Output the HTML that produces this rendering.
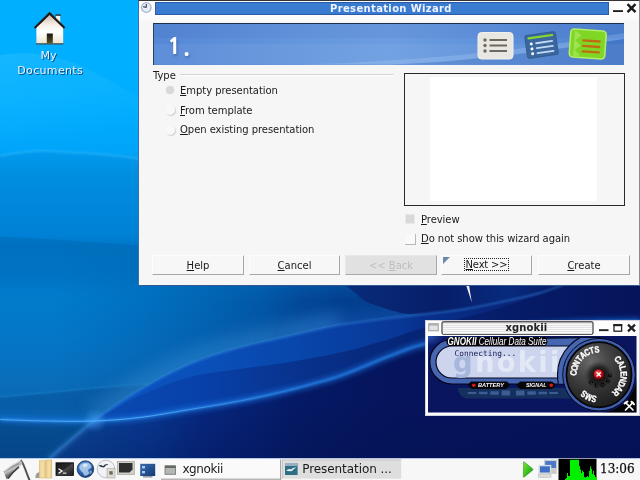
<!DOCTYPE html>
<html><head><meta charset="utf-8"><title>Desktop</title>
<style>
html,body{margin:0;padding:0;width:640px;height:480px;overflow:hidden;background:#0a2a80;}
body{position:relative;will-change:transform;font-family:"DejaVu Sans","Liberation Sans",sans-serif;font-size:11px;color:#000;}
.abs{position:absolute;}
#wall{position:absolute;left:0;top:0;width:640px;height:480px;}
u{text-decoration:underline;text-underline-offset:0.5px;text-decoration-thickness:1px;}
/* desktop icon */
.dlabel{position:absolute;color:#eef6ff;text-shadow:1px 1px 0 #0a2a50;font-size:11px;white-space:nowrap;}
/* dialog */
#dlg{position:absolute;left:138px;top:0;width:502px;height:286px;background:#f6f6f6;box-sizing:border-box;border-left:1px solid #3f6ea8;border-right:1px solid #8a8a8a;border-bottom:1px solid #33598f;border-top:1px solid #333;}
#dlg .titleblue{position:absolute;left:16px;top:1px;width:454px;height:13px;background:#3a7bd2;border:1px solid #2a5aa8;box-sizing:border-box;}
#dlg .title{position:absolute;left:191px;top:1px;width:200px;height:14px;line-height:14px;text-align:left;color:#eef3fb;font-weight:bold;font-size:10px;letter-spacing:0.35px;white-space:nowrap;}
.lbl{position:absolute;white-space:nowrap;font-size:10px;line-height:12px;letter-spacing:-0.05px;color:#1a1a1a;}
.btn{position:absolute;top:254px;height:20px;box-sizing:border-box;background:#f7f7f7;border-right:1px solid #a8a8a8;border-bottom:1px solid #a8a8a8;border-top:1px solid #fdfdfd;border-left:1px solid #fdfdfd;text-align:center;line-height:20px;font-size:10px;color:#1a1a1a;}
/* taskbar */
#tb{position:absolute;left:0;top:458px;width:640px;height:22px;background:#f1f1f1;border-top:1px solid #fafafa;box-sizing:border-box;}
</style></head><body>
<svg id="wall" viewBox="0 0 640 480">
<defs>
<linearGradient id="g0" x1="0" y1="0" x2="0" y2="1"><stop offset="0.0000" stop-color="#00b0ff"/><stop offset="0.2083" stop-color="#00aeff"/><stop offset="0.3125" stop-color="#00a5fa"/><stop offset="0.3646" stop-color="#0093e4"/><stop offset="0.4104" stop-color="#0089de"/><stop offset="0.4896" stop-color="#0081d5"/><stop offset="0.5125" stop-color="#0077c8"/><stop offset="0.5729" stop-color="#0076c6"/><stop offset="0.6250" stop-color="#007ccb"/><stop offset="0.7292" stop-color="#0674c4"/><stop offset="0.8125" stop-color="#0a6cb8"/><stop offset="0.8750" stop-color="#0a64b0"/><stop offset="0.9542" stop-color="#0a58a8"/><stop offset="1.0000" stop-color="#0a54a0"/></linearGradient>
<linearGradient id="gx" gradientUnits="userSpaceOnUse" x1="0" y1="0" x2="470" y2="0"><stop offset="0.0000" stop-color="#061060" stop-opacity="0"/><stop offset="0.1277" stop-color="#061060" stop-opacity="0.0"/><stop offset="0.2979" stop-color="#061060" stop-opacity="0.1"/><stop offset="0.4255" stop-color="#061060" stop-opacity="0.2"/><stop offset="0.5532" stop-color="#061060" stop-opacity="0.33"/><stop offset="0.6383" stop-color="#061060" stop-opacity="0.47"/><stop offset="0.7234" stop-color="#061060" stop-opacity="0.56"/><stop offset="0.8511" stop-color="#061060" stop-opacity="0.6"/><stop offset="1.0000" stop-color="#061060" stop-opacity="0.6"/></linearGradient>
<linearGradient id="gvm" x1="0" y1="0" x2="0" y2="1"><stop offset="0" stop-color="#fff" stop-opacity="0"/><stop offset="0.25" stop-color="#fff" stop-opacity="1"/><stop offset="1" stop-color="#fff" stop-opacity="1"/></linearGradient>
<mask id="mv"><rect x="0" y="240" width="640" height="240" fill="url(#gvm)"/></mask>
<linearGradient id="gS1" gradientUnits="userSpaceOnUse" x1="60" y1="0" x2="640" y2="0"><stop offset="0.0000" stop-color="#0c56ba"/><stop offset="0.1379" stop-color="#0a52be"/><stop offset="0.2414" stop-color="#0a50ba"/><stop offset="0.4138" stop-color="#0846aa"/><stop offset="0.5862" stop-color="#083796"/><stop offset="0.6293" stop-color="#08308c"/><stop offset="0.7759" stop-color="#082476"/><stop offset="1.0000" stop-color="#06165c"/></linearGradient>
<linearGradient id="gS1b" gradientUnits="userSpaceOnUse" x1="60" y1="0" x2="640" y2="0"><stop offset="0.0000" stop-color="#0a4eb4"/><stop offset="0.2414" stop-color="#0841aa"/><stop offset="0.4138" stop-color="#08328c"/><stop offset="0.5862" stop-color="#072678"/><stop offset="0.7759" stop-color="#061c68"/><stop offset="1.0000" stop-color="#06145a"/></linearGradient>
<linearGradient id="gS2" gradientUnits="userSpaceOnUse" x1="40" y1="0" x2="640" y2="0"><stop offset="0.0000" stop-color="#0a50a0"/><stop offset="0.1000" stop-color="#094298"/><stop offset="0.1833" stop-color="#083892"/><stop offset="0.2667" stop-color="#062880"/><stop offset="0.4333" stop-color="#051964"/><stop offset="0.6000" stop-color="#05145c"/><stop offset="1.0000" stop-color="#06125a"/></linearGradient>
<linearGradient id="gS2v" gradientUnits="userSpaceOnUse" x1="0" y1="400" x2="0" y2="458"><stop offset="0" stop-color="#04104a" stop-opacity="0"/><stop offset="1" stop-color="#04104a" stop-opacity="0.3"/></linearGradient>
<linearGradient id="gband" gradientUnits="userSpaceOnUse" x1="0" y1="388" x2="0" y2="421"><stop offset="0" stop-color="#003c80" stop-opacity=".3"/><stop offset="0.6" stop-color="#003c80" stop-opacity=".25"/><stop offset="1" stop-color="#0050b0" stop-opacity=".05"/></linearGradient>
<linearGradient id="ge2" gradientUnits="userSpaceOnUse" x1="0" y1="238" x2="0" y2="290"><stop offset="0" stop-color="#00407a" stop-opacity=".16"/><stop offset="1" stop-color="#00407a" stop-opacity="0"/></linearGradient>
<linearGradient id="garc0" gradientUnits="userSpaceOnUse" x1="0" y1="55" x2="20" y2="150"><stop offset="0" stop-color="#60d0ff" stop-opacity=".22"/><stop offset="1" stop-color="#60d0ff" stop-opacity="0"/></linearGradient>
<linearGradient id="garc" gradientUnits="userSpaceOnUse" x1="0" y1="152" x2="0" y2="200"><stop offset="0" stop-color="#003a90" stop-opacity=".10"/><stop offset="1" stop-color="#003a90" stop-opacity="0"/></linearGradient>
<linearGradient id="gD" gradientUnits="userSpaceOnUse" x1="344" y1="0" x2="563" y2="0"><stop offset="0" stop-color="#082c7c"/><stop offset="0.45" stop-color="#071e68"/><stop offset="0.75" stop-color="#082a7e"/><stop offset="1" stop-color="#071a62"/></linearGradient>
<linearGradient id="gcore" gradientUnits="userSpaceOnUse" x1="0" y1="0" x2="340" y2="0"><stop offset="0" stop-color="#7cccff" stop-opacity=".6"/><stop offset="0.35" stop-color="#7cccff" stop-opacity=".7"/><stop offset="1" stop-color="#7cccff" stop-opacity="0"/></linearGradient>
<radialGradient id="gglow"><stop offset="0" stop-color="#4aa8ff" stop-opacity=".45"/><stop offset="1" stop-color="#60b8ff" stop-opacity="0"/></radialGradient>
<filter id="b1" x="-5%" y="-50%" width="110%" height="200%"><feGaussianBlur stdDeviation="0.8"/></filter>
<clipPath id="cAbove"><path d="M50.0 458.0C57.3 451.8 79.0 432.3 94.0 421.0 C109.0 409.7 124.0 399.5 140.0 390.0 C156.0 380.5 173.3 371.1 190.0 364.0 C206.7 356.9 223.3 352.2 240.0 347.5 C256.7 342.8 273.3 339.8 290.0 336.0 C306.7 332.2 323.3 328.0 340.0 325.0 C356.7 322.0 375.8 319.8 390.0 318.0 C404.2 316.2 412.5 315.5 425.0 314.0 C437.5 312.5 451.5 311.2 465.0 309.0 C478.5 306.8 493.5 303.7 506.0 301.0 C518.5 298.3 530.5 295.7 540.0 293.0 C549.5 290.3 559.2 286.3 563.0 285.0 L563 270 L0 270 L0 458Z"/></clipPath>
<filter id="b8" x="-20%" y="-60%" width="140%" height="220%"><feGaussianBlur stdDeviation="9"/></filter>
<filter id="b3" x="-5%" y="-50%" width="110%" height="200%"><feGaussianBlur stdDeviation="2.5"/></filter>
</defs>
<rect width="640" height="480" fill="url(#g0)"/>
<rect y="240" width="640" height="240" fill="url(#gx)" mask="url(#mv)"/>
<!-- upper-left arc & edge 2 -->
<path d="M0 55.3 C15 53 28 53 37 54 C52 56 65 59.5 76.6 64 C90 70 100 75.5 109 80.5 C122 88 132 93 140 97 L140 156 L0 156Z" fill="url(#garc0)"/>
<path d="M0 156 C25 151 45 150 60 152 C90 153 115 155 140 159 L140 205 L0 205Z" fill="url(#garc)"/>
<path d="M0 156 C25 151 45 150 60 152 C90 153 115 155 140 159" fill="none" stroke="#48c4ff" stroke-width="1.4" opacity=".55" filter="url(#b1)"/>
<path d="M0 236.5 C50 239 100 242 140 246 L140 295 L0 295Z" fill="url(#ge2)"/>
<!-- light band on left -->
<path d="M0 397.5 L110 387.2 L150 384.5" fill="none" stroke="#3a9ae0" stroke-width="1" opacity=".45" filter="url(#b1)"/>
<path d="M0 397.7 L140 384.5 L150 385 L140.0 390.0 L117.0 405.0 L94.0 421.0 L0 419.5Z" fill="url(#gband)"/>
<g clip-path="url(#cAbove)"><path d="M94.0 421.0C101.7 415.8 124.0 399.5 140.0 390.0 C156.0 380.5 173.3 371.1 190.0 364.0 C206.7 356.9 223.3 352.2 240.0 347.5 C256.7 342.8 273.3 339.8 290.0 336.0 C306.7 332.2 331.7 326.8 340.0 325.0" fill="none" stroke="#50a8e8" stroke-width="26" opacity=".32" filter="url(#b8)"/><path d="M290.0 336.0C298.3 334.2 323.3 328.0 340.0 325.0 C356.7 322.0 375.8 319.8 390.0 318.0 C404.2 316.2 412.5 315.5 425.0 314.0 C437.5 312.5 458.3 309.8 465.0 309.0" fill="none" stroke="#2a78e0" stroke-width="16" opacity=".3" filter="url(#b8)"/></g>
<!-- region right of D above C2 -->
<path d="M344.0 284.0C345.8 285.5 351.5 290.2 355.0 293.0 C358.5 295.8 361.2 298.8 365.0 301.0 C368.8 303.2 373.8 304.5 378.0 306.0 C382.2 307.5 385.2 308.7 390.0 310.0 C394.8 311.3 401.2 313.3 407.0 314.0 C412.8 314.7 422.0 314.0 425.0 314.0 C431.7 313.2 451.5 311.2 465.0 309.0 C478.5 306.8 493.5 303.7 506.0 301.0 C518.5 298.3 530.5 295.7 540.0 293.0 C549.5 290.3 559.2 286.3 563.0 285.0 L563 284Z" fill="url(#gD)"/>
<rect x="563" y="284" width="77" height="60" fill="#06155b"/>
<!-- S1 upper sub-band -->
<path d="M50.0 458.0C57.3 451.8 79.0 432.3 94.0 421.0 C109.0 409.7 124.0 399.5 140.0 390.0 C156.0 380.5 173.3 371.1 190.0 364.0 C206.7 356.9 223.3 352.2 240.0 347.5 C256.7 342.8 273.3 339.8 290.0 336.0 C306.7 332.2 323.3 328.0 340.0 325.0 C356.7 322.0 375.8 319.8 390.0 318.0 C404.2 316.2 412.5 315.5 425.0 314.0 C437.5 312.5 451.5 311.2 465.0 309.0 C478.5 306.8 493.5 303.7 506.0 301.0 C518.5 298.3 530.5 295.7 540.0 293.0 C549.5 290.3 559.2 286.3 563.0 285.0 L640 284 L640 458Z" fill="url(#gS1)"/>
<!-- lower sub-band -->
<path d="M94.0 421.0C101.7 416.8 124.0 402.8 140.0 395.5 C156.0 388.2 173.3 381.4 190.0 377.0 C206.7 372.6 223.3 371.5 240.0 369.0 C256.7 366.5 273.3 364.8 290.0 362.0 C306.7 359.2 323.3 356.3 340.0 352.5 C356.7 348.7 375.8 343.2 390.0 339.0 C404.2 334.8 406.7 332.7 425.0 327.5 C443.3 322.3 477.0 315.1 500.0 308.0 C523.0 300.9 552.5 288.8 563.0 285.0 L640 284 L640 458 L94 458Z" fill="url(#gS1b)"/>
<!-- S2 dark under C1 -->
<path d="M94.0 421.0C101.7 420.4 124.0 419.4 140.0 417.5 C156.0 415.6 173.3 412.2 190.0 409.5 C206.7 406.8 223.3 404.2 240.0 401.0 C256.7 397.8 273.3 394.2 290.0 390.0 C306.7 385.8 323.3 381.7 340.0 376.0 C356.7 370.3 375.8 361.3 390.0 356.0 C404.2 350.7 406.7 348.3 425.0 344.0 C443.3 339.7 475.8 333.5 500.0 330.0 C524.2 326.5 546.7 324.5 570.0 323.0 C593.3 321.5 628.3 321.3 640.0 321.0 L640 458 L50 458 C86.7 427.2 57.3 451.8 50.0 458.0Z" fill="url(#gS2)"/>
<path d="M94.0 421.0C101.7 420.4 124.0 419.4 140.0 417.5 C156.0 415.6 173.3 412.2 190.0 409.5 C206.7 406.8 223.3 404.2 240.0 401.0 C256.7 397.8 273.3 394.2 290.0 390.0 C306.7 385.8 323.3 381.7 340.0 376.0 C356.7 370.3 375.8 361.3 390.0 356.0 C404.2 350.7 406.7 348.3 425.0 344.0 C443.3 339.7 475.8 333.5 500.0 330.0 C524.2 326.5 546.7 324.5 570.0 323.0 C593.3 321.5 628.3 321.3 640.0 321.0 L640 458 L50 458 C86.7 427.2 57.3 451.8 50.0 458.0Z" fill="url(#gS2v)"/>
<!-- highlights -->
<path d="M0 419.5 L94 421 L50 458 L0 458Z" fill="#002858" opacity=".36"/>
<path d="M96 419 L48 460" fill="none" stroke="#58a8ea" stroke-width="3.5" opacity=".45" filter="url(#b3)"/>
<path d="M0.0 419.5C7.8 419.8 31.3 420.8 47.0 421.0 C62.7 421.2 78.5 421.6 94.0 421.0 C109.5 420.4 124.0 419.4 140.0 417.5 C156.0 415.6 173.3 412.2 190.0 409.5 C206.7 406.8 223.3 404.2 240.0 401.0 C256.7 397.8 273.3 394.2 290.0 390.0 C306.7 385.8 323.3 381.7 340.0 376.0 C356.7 370.3 375.8 361.3 390.0 356.0 C404.2 350.7 406.7 348.3 425.0 344.0 C443.3 339.7 475.8 333.5 500.0 330.0 C524.2 326.5 546.7 324.5 570.0 323.0 C593.3 321.5 628.3 321.3 640.0 321.0" fill="none" stroke="#36a2ff" stroke-width="1.7" opacity=".95" filter="url(#b1)"/>
<path d="M0.0 419.5C7.8 419.8 31.3 420.8 47.0 421.0 C62.7 421.2 78.5 421.6 94.0 421.0 C109.5 420.4 124.0 419.4 140.0 417.5 C156.0 415.6 173.3 412.2 190.0 409.5 C206.7 406.8 223.3 404.2 240.0 401.0 C256.7 397.8 273.3 394.2 290.0 390.0 C306.7 385.8 323.3 381.7 340.0 376.0 C356.7 370.3 375.8 361.3 390.0 356.0 C404.2 350.7 406.7 348.3 425.0 344.0 C443.3 339.7 475.8 333.5 500.0 330.0 C524.2 326.5 546.7 324.5 570.0 323.0 C593.3 321.5 628.3 321.3 640.0 321.0" fill="none" stroke="#1a78e8" stroke-width="7" opacity=".5" filter="url(#b3)"/>
<path d="M50.0 458.0C57.3 451.8 79.0 432.3 94.0 421.0 C109.0 409.7 124.0 399.5 140.0 390.0 C156.0 380.5 173.3 371.1 190.0 364.0 C206.7 356.9 223.3 352.2 240.0 347.5 C256.7 342.8 273.3 339.8 290.0 336.0 C306.7 332.2 323.3 328.0 340.0 325.0 C356.7 322.0 375.8 319.8 390.0 318.0 C404.2 316.2 412.5 315.5 425.0 314.0 C437.5 312.5 451.5 311.2 465.0 309.0 C478.5 306.8 493.5 303.7 506.0 301.0 C518.5 298.3 530.5 295.7 540.0 293.0 C549.5 290.3 559.2 286.3 563.0 285.0" fill="none" stroke="#3a8cea" stroke-width="1.5" opacity=".6" filter="url(#b1)"/>
<path d="M0.0 419.5C7.8 419.8 31.3 420.8 47.0 421.0 C62.7 421.2 78.5 421.6 94.0 421.0 C109.5 420.4 124.0 419.4 140.0 417.5 C156.0 415.6 173.3 412.2 190.0 409.5 C206.7 406.8 223.3 404.2 240.0 401.0 C256.7 397.8 273.3 394.2 290.0 390.0 C306.7 385.8 331.7 378.3 340.0 376.0" fill="none" stroke="url(#gcore)" stroke-width=".9"/>
<circle cx="95" cy="421" r="12" fill="url(#gglow)"/>
<path d="M466 285 L471.8 302.5 L469 285Z" fill="#fff" opacity=".92"/>
</svg>

<!-- dialog window -->
<div id="dlg">
  <div class="abs" style="left:0;top:0;width:500px;height:21px;background:linear-gradient(#fdfdfd 0,#fdfdfd 15px,#f8f8f8 21px);"></div>
  <svg class="abs" style="left:1px;top:0px" width="13" height="13" viewBox="0 0 13 13"><circle cx="6.3" cy="6.5" r="4.8" fill="#e4eefb" stroke="#a9b2c6" stroke-width="1.2"/><path d="M6.3 6.5 L3.2 5.6 M6.3 6.5 L6.3 3" stroke="#3a3f55" stroke-width="1.1" fill="none"/></svg>
  <div class="titleblue"></div>
  <div class="title">Presentation Wizard</div>
  <svg class="abs" style="left:472px;top:1px" width="28" height="14" viewBox="0 0 28 14"><rect x="2" y="8.2" width="10" height="1.8" fill="#1a1a1a"/><path d="M16.5 2.2 L24.5 10.2 M24.5 2.2 L16.5 10.2" stroke="#1a1a1a" stroke-width="2.4" stroke-linecap="butt"/></svg>
  <!-- banner -->
  <div class="abs" id="banner" style="left:14px;top:22px;width:471px;height:42px;box-sizing:border-box;border-top:1px solid #1f2f4f;border-left:1px solid #2a3f66;background:linear-gradient(90deg,#5588d6 0%,#6496dd 30%,#6c9de1 50%,#5d90da 75%,#4b80d0 100%);overflow:hidden;">
    <div class="abs" style="left:13.7px;top:9.5px;font-family:'NanumGothic','Liberation Sans',sans-serif;font-size:21.5px;line-height:26px;letter-spacing:2.5px;font-weight:800;color:#fff;text-shadow:1px 2px 3px rgba(40,70,130,.55);">1.</div>
  </div>
  <div class="lbl" style="left:14px;top:69px;">Type</div>
  <div class="abs" style="left:41px;top:73px;width:214px;height:1px;background:#d4d4d4;"></div>
  <div class="abs" style="left:41px;top:74px;width:214px;height:1px;background:#fff;"></div>
  <div class="lbl" style="left:41px;top:84px;"><u>E</u>mpty presentation</div>
  <div class="lbl" style="left:41px;top:104px;"><u>F</u>rom template</div>
  <div class="lbl" style="left:41px;top:123px;"><u>O</u>pen existing presentation</div>
  <div class="abs" style="left:27px;top:85px;width:8px;height:8px;border-radius:5px;background:#d8d8d8;box-shadow:0 0 1px #e0e0e0;"></div>
  <div class="abs" style="left:26px;top:104px;width:10px;height:10px;border-radius:6px;background:#f8f8f8;box-shadow:1px 1px 1px #d0d0d0;"></div>
  <div class="abs" style="left:26px;top:124px;width:10px;height:10px;border-radius:6px;background:#f8f8f8;box-shadow:1px 1px 1px #d0d0d0;"></div>
  <!-- preview box -->
  <div class="abs" style="left:265px;top:72px;width:221px;height:133px;box-sizing:border-box;border:1px solid #2a2a2a;background:#f6f6f6;">
    <div class="abs" style="left:25px;top:3px;width:167px;height:124px;background:#fff;"></div>
  </div>
  <div class="abs" style="left:266px;top:213px;width:10px;height:10px;background:#d9d9d9;border:1px solid #e8e8e8;box-sizing:border-box;"></div>
  <div class="lbl" style="left:282px;top:213px;"><u>P</u>review</div>
  <div class="abs" style="left:266px;top:233px;width:11px;height:11px;background:#f9f9f9;border-right:1px solid #b8b8b8;border-bottom:1px solid #b8b8b8;box-sizing:border-box;"></div>
  <div class="lbl" style="left:282px;top:232px;"><u>D</u>o not show this wizard again</div>
  <div class="btn" style="left:13px;width:92px;"><u>H</u>elp</div>
  <div class="btn" style="left:110px;width:91px;"><u>C</u>ancel</div>
  <div class="btn" style="left:206px;width:92px;background:#e1e1e1;color:#bdbdbd;border-top-color:#e8e8e8;border-left-color:#e8e8e8;">&lt;&lt; <u>B</u>ack</div>
  <div class="btn" style="left:302px;width:91px;"><span style="display:inline-block;position:relative;top:-1px;border:1px dotted #222;line-height:11px;padding:0 0.5px;letter-spacing:-0.2px;"><u>N</u>ext &gt;&gt;</span>
    <svg class="abs" style="left:1px;top:1px" width="8" height="8"><path d="M0 0H7L0 7Z" fill="#6c87b0"/></svg></div>
  <div class="btn" style="left:399px;width:92px;"><u>C</u>reate</div>
</div>

<!-- overlay icons in page coordinates -->
<svg id="ov" class="abs" style="left:0;top:0;pointer-events:none" width="640" height="480" viewBox="0 0 640 480">
<g id="xgnokii" font-family="'DejaVu Sans','Liberation Sans',sans-serif">
<defs>
<radialGradient id="dial" cx="0.38" cy="0.3" r="0.75"><stop offset="0" stop-color="#6a6a6a"/><stop offset="0.35" stop-color="#474747"/><stop offset="0.7" stop-color="#2c2c2c"/><stop offset="1" stop-color="#1c1c1c"/></radialGradient>
<radialGradient id="dialc" cx="0.5" cy="0.5" r="0.5"><stop offset="0" stop-color="#0c0c0c"/><stop offset="0.6" stop-color="#1a1a1a" stop-opacity=".8"/><stop offset="1" stop-color="#333" stop-opacity="0"/></radialGradient>
<radialGradient id="redb" cx="0.4" cy="0.35" r="0.7"><stop offset="0" stop-color="#ff6a6a"/><stop offset="0.5" stop-color="#c4141c"/><stop offset="1" stop-color="#6a0008"/></radialGradient>
<radialGradient id="xgbg" cx="0" cy="0" r="1"><stop offset="0" stop-color="#2a56b0"/><stop offset="0.25" stop-color="#0c1c6c"/><stop offset="1" stop-color="#0a1560"/></radialGradient>
<clipPath id="xgclip"><rect x="428" y="336" width="208.5" height="76.5"/></clipPath>
<clipPath id="frclip"><rect x="540" y="338" width="59" height="45.5"/></clipPath>
<clipPath id="lcdclip"><path d="M452 346 L590 346 L590 378 L452 378 A16 16 0 0 1 452 346Z"/></clipPath>
</defs>
<rect x="425.5" y="320.5" width="214" height="95" fill="#fdfdfd" stroke="#cfd3de" stroke-width="1"/>
<!-- menu button -->
<rect x="428.75" y="323.75" width="9.5" height="7" fill="#e4e4e4" stroke="#9a9a9a" stroke-width="1"/><rect x="429" y="324" width="9" height="1.6" fill="#b0b0b0"/>
<!-- title field -->
<rect x="442" y="321.7" width="151" height="12.6" rx="2" fill="#fafafa" stroke="#5a5a5a" stroke-width="1.4"/>
<rect x="443" y="323" width="149" height="1" fill="#e2e2e2"/><rect x="443" y="325" width="149" height="1" fill="#e2e2e2"/><rect x="443" y="327" width="149" height="1" fill="#e2e2e2"/><rect x="443" y="329" width="149" height="1" fill="#e2e2e2"/><rect x="443" y="331" width="149" height="1" fill="#e2e2e2"/><rect x="443" y="333" width="149" height="1" fill="#e2e2e2"/>
<text x="505.5" y="331" font-size="10" font-weight="bold" fill="#222" letter-spacing="0.1">xgnokii</text>
<rect x="599" y="329.2" width="9.5" height="1.9" fill="#222"/>
<rect x="614" y="324.8" width="7.6" height="6.4" fill="none" stroke="#222" stroke-width="1.3"/><rect x="613.4" y="324" width="8.8" height="2.2" fill="#222"/>
<path d="M628 324.7 L635 331.3 M635 324.7 L628 331.3" stroke="#222" stroke-width="2.3"/>
<!-- content -->
<rect x="428" y="336" width="208.5" height="76.5" fill="#0a1560"/>
<g clip-path="url(#xgclip)">
<rect x="428" y="336" width="60" height="40" fill="url(#xgbg)"/>
<path d="M600 412.5 L636.5 412.5 L636.5 372 A37 37 0 0 1 600 412.5Z" fill="#050505"/>
<!-- blue frame -->
<path d="M452 339.5 L600 337.5 L600 384 L452 384 A22.25 22.25 0 0 1 452 339.5Z" fill="#4766b2" stroke="#05081c" stroke-width="1.2"/>
<!-- teal bar -->
<path d="M457.5 388 L580 388 L580 398.5 L468 398.5 Q459 398 457.5 388Z" fill="#15305e"/>
<rect x="467.8" y="392.00" width="8.5" height="2" fill="#3e5c92"/><rect x="479" y="391.75" width="8.5" height="2.5" fill="#3e5c92"/><rect x="490.3" y="391.25" width="8.5" height="3.5" fill="#3e5c92"/><rect x="501.6" y="390.50" width="8.5" height="5" fill="#3e5c92"/><rect x="516" y="390.50" width="8.5" height="5" fill="#3e5c92"/><rect x="527.3" y="391.25" width="8.5" height="3.5" fill="#3e5c92"/><rect x="538.5" y="391.75" width="8.5" height="2.5" fill="#3e5c92"/><rect x="549.4" y="392.00" width="8.5" height="2" fill="#3e5c92"/>
<!-- lcd -->
<path d="M452 346 L590 346 L590 378 L452 378 A16 16 0 0 1 452 346Z" fill="#ccd4ee" stroke="#05081c" stroke-width="1.2"/>
<g clip-path="url(#lcdclip)">
<text x="453" y="371.5" font-size="27.5" font-weight="bold" font-family="'DejaVu Sans','Liberation Sans',sans-serif" letter-spacing="2.2"><tspan fill="#a7b6db">g</tspan><tspan fill="#e3e8f6">nokii</tspan></text>
</g>
<text x="454.5" y="356" font-size="7.8" fill="#101850" font-family="'DejaVu Sans Mono','Liberation Mono',monospace" letter-spacing="0.05">Connecting...</text>
<!-- title pill -->
<path d="M449 337 L545 337 Q550 341.5 545 346 L449 346 Q443.5 341.5 449 337Z" fill="#05050a"/>
<text x="447.5" y="345" font-size="10.2" font-style="italic" fill="#fff" font-family="'Liberation Sans',sans-serif" textLength="99" lengthAdjust="spacingAndGlyphs"><tspan font-weight="bold">GNOKII</tspan> Cellular Data Suite</text>
<!-- battery / signal pills -->
<path d="M471 381.6 L507 381.6 L510 385 L506 389 L472 389 L467.8 385Z" fill="#05050a"/>
<path d="M520 381.6 L552 381.6 L556 385 L552 389 L520 389 L516.5 385Z" fill="#05050a"/>
<circle cx="473.8" cy="385.3" r="1.8" fill="#e01818"/><circle cx="551.3" cy="385.3" r="1.8" fill="#e01818"/>
<text x="478" y="387.4" font-size="5.6" font-weight="bold" font-style="italic" fill="#fff" font-family="'Liberation Sans',sans-serif" textLength="26" lengthAdjust="spacingAndGlyphs">BATTERY</text>
<text x="526" y="387.4" font-size="5.6" font-weight="bold" font-style="italic" fill="#fff" font-family="'Liberation Sans',sans-serif" textLength="20.5" lengthAdjust="spacingAndGlyphs">SIGNAL</text>
<!-- dial -->
<g clip-path="url(#frclip)"><circle cx="599" cy="374.7" r="41.5" fill="#4766b2" stroke="#05081c" stroke-width="1.2"/></g>
<circle cx="599" cy="374.7" r="36.3" fill="#3f5fae" stroke="#05081c" stroke-width="1"/>
<circle cx="599" cy="374.7" r="32.6" fill="url(#dial)" stroke="#05050a" stroke-width="1.7"/>
<circle cx="599" cy="375.7" r="15" fill="url(#dialc)"/>
<circle cx="598.7" cy="374.4" r="5.4" fill="url(#redb)" stroke="#2a0004" stroke-width=".6"/>
<path d="M596.6 372.3 L600.8 376.5 M600.8 372.3 L596.6 376.5" stroke="#fff" stroke-width="1.3"/>
<text transform="translate(576.7 373.2) rotate(-86.2) scale(0.8 1)" text-anchor="middle" font-size="9.2" font-weight="bold" font-family="'Liberation Sans',sans-serif" fill="#fff" stroke="#fff" stroke-width="0.35">C</text><text transform="translate(577.5 368.8) rotate(-74.6) scale(0.8 1)" text-anchor="middle" font-size="9.2" font-weight="bold" font-family="'Liberation Sans',sans-serif" fill="#fff" stroke="#fff" stroke-width="0.35">O</text><text transform="translate(579.1 364.6) rotate(-62.9) scale(0.8 1)" text-anchor="middle" font-size="9.2" font-weight="bold" font-family="'Liberation Sans',sans-serif" fill="#fff" stroke="#fff" stroke-width="0.35">N</text><text transform="translate(581.6 360.8) rotate(-51.3) scale(0.8 1)" text-anchor="middle" font-size="9.2" font-weight="bold" font-family="'Liberation Sans',sans-serif" fill="#fff" stroke="#fff" stroke-width="0.35">T</text><text transform="translate(584.8 357.5) rotate(-39.7) scale(0.8 1)" text-anchor="middle" font-size="9.2" font-weight="bold" font-family="'Liberation Sans',sans-serif" fill="#fff" stroke="#fff" stroke-width="0.35">A</text><text transform="translate(588.5 355.0) rotate(-28.1) scale(0.8 1)" text-anchor="middle" font-size="9.2" font-weight="bold" font-family="'Liberation Sans',sans-serif" fill="#fff" stroke="#fff" stroke-width="0.35">C</text><text transform="translate(592.7 353.3) rotate(-16.4) scale(0.8 1)" text-anchor="middle" font-size="9.2" font-weight="bold" font-family="'Liberation Sans',sans-serif" fill="#fff" stroke="#fff" stroke-width="0.35">T</text><text transform="translate(597.1 352.5) rotate(-4.8) scale(0.8 1)" text-anchor="middle" font-size="9.2" font-weight="bold" font-family="'Liberation Sans',sans-serif" fill="#fff" stroke="#fff" stroke-width="0.35">S</text>
<text transform="translate(615.5 361.0) rotate(50.2) scale(0.8 1)" text-anchor="middle" font-size="9.2" font-weight="bold" font-family="'Liberation Sans',sans-serif" fill="#fff" stroke="#fff" stroke-width="0.35">C</text><text transform="translate(618.1 364.9) rotate(62.8) scale(0.8 1)" text-anchor="middle" font-size="9.2" font-weight="bold" font-family="'Liberation Sans',sans-serif" fill="#fff" stroke="#fff" stroke-width="0.35">A</text><text transform="translate(619.8 369.2) rotate(75.2) scale(0.8 1)" text-anchor="middle" font-size="9.2" font-weight="bold" font-family="'Liberation Sans',sans-serif" fill="#fff" stroke="#fff" stroke-width="0.35">L</text><text transform="translate(620.5 373.9) rotate(87.8) scale(0.8 1)" text-anchor="middle" font-size="9.2" font-weight="bold" font-family="'Liberation Sans',sans-serif" fill="#fff" stroke="#fff" stroke-width="0.35">E</text><text transform="translate(620.2 378.5) rotate(100.2) scale(0.8 1)" text-anchor="middle" font-size="9.2" font-weight="bold" font-family="'Liberation Sans',sans-serif" fill="#fff" stroke="#fff" stroke-width="0.35">N</text><text transform="translate(618.8 383.0) rotate(112.8) scale(0.8 1)" text-anchor="middle" font-size="9.2" font-weight="bold" font-family="'Liberation Sans',sans-serif" fill="#fff" stroke="#fff" stroke-width="0.35">D</text><text transform="translate(616.6 387.1) rotate(125.2) scale(0.8 1)" text-anchor="middle" font-size="9.2" font-weight="bold" font-family="'Liberation Sans',sans-serif" fill="#fff" stroke="#fff" stroke-width="0.35">A</text><text transform="translate(613.5 390.6) rotate(137.8) scale(0.8 1)" text-anchor="middle" font-size="9.2" font-weight="bold" font-family="'Liberation Sans',sans-serif" fill="#fff" stroke="#fff" stroke-width="0.35">R</text>
<text transform="translate(594.7 395.8) rotate(191.7) scale(0.8 1)" text-anchor="middle" font-size="9.2" font-weight="bold" font-family="'Liberation Sans',sans-serif" fill="#fff" stroke="#fff" stroke-width="0.35">S</text><text transform="translate(589.9 394.2) rotate(205.0) scale(0.8 1)" text-anchor="middle" font-size="9.2" font-weight="bold" font-family="'Liberation Sans',sans-serif" fill="#fff" stroke="#fff" stroke-width="0.35">M</text><text transform="translate(585.7 391.6) rotate(218.3) scale(0.8 1)" text-anchor="middle" font-size="9.2" font-weight="bold" font-family="'Liberation Sans',sans-serif" fill="#fff" stroke="#fff" stroke-width="0.35">S</text>
<text transform="translate(589.3 383.6) rotate(45.6) scale(1.0 1)" text-anchor="middle" font-size="5.6" font-weight="bold" font-family="'Liberation Sans',sans-serif" fill="#000">C</text><text transform="translate(595.8 387.3) rotate(12.8) scale(1.0 1)" text-anchor="middle" font-size="5.6" font-weight="bold" font-family="'Liberation Sans',sans-serif" fill="#000">L</text><text transform="translate(603.3 386.8) rotate(-20.0) scale(1.0 1)" text-anchor="middle" font-size="5.6" font-weight="bold" font-family="'Liberation Sans',sans-serif" fill="#000">O</text><text transform="translate(609.3 382.4) rotate(-52.8) scale(1.0 1)" text-anchor="middle" font-size="5.6" font-weight="bold" font-family="'Liberation Sans',sans-serif" fill="#000">S</text><text transform="translate(611.9 375.4) rotate(-85.6) scale(1.0 1)" text-anchor="middle" font-size="5.6" font-weight="bold" font-family="'Liberation Sans',sans-serif" fill="#000">E</text>
<!-- tools icon -->
<path d="M625.5 402.5 L633 410 M633 402.5 L625.5 410" stroke="#fff" stroke-width="1.7" stroke-linecap="round"/>
<path d="M624.5 403.5 L627.5 401.5 M631.5 401.8 L634 404.2" stroke="#fff" stroke-width="2" stroke-linecap="round"/>
</g>
</g>
<!--END-XG-->
<g id="taskbar" font-family="'DejaVu Sans','Liberation Sans',sans-serif">
<defs>
<linearGradient id="lg1" gradientUnits="userSpaceOnUse" x1="9" y1="465" x2="13" y2="473"><stop offset="0" stop-color="#d0d0d0"/><stop offset="0.35" stop-color="#9a9a9a"/><stop offset="0.6" stop-color="#c4c4c4"/><stop offset="1" stop-color="#6a6a6a"/></linearGradient>
<linearGradient id="fold" x1="0" y1="0" x2="1" y2="0"><stop offset="0" stop-color="#ecd192"/><stop offset="0.5" stop-color="#f5e0a8"/><stop offset="1" stop-color="#e6c684"/></linearGradient>
<radialGradient id="globe" cx="0.4" cy="0.35" r="0.7"><stop offset="0" stop-color="#6a9cd8"/><stop offset="0.6" stop-color="#2c62aa"/><stop offset="1" stop-color="#103468"/></radialGradient>
<linearGradient id="term" x1="0" y1="0" x2="1" y2="1"><stop offset="0" stop-color="#161616"/><stop offset="0.5" stop-color="#2a2a2a"/><stop offset="0.51" stop-color="#4a4a4a"/><stop offset="1" stop-color="#1a1a1a"/></linearGradient>
<linearGradient id="dsk" x1="0" y1="0" x2="1" y2="1"><stop offset="0" stop-color="#3a6cb0"/><stop offset="1" stop-color="#143a74"/></linearGradient>
<linearGradient id="play" x1="0" y1="0" x2="1" y2="1"><stop offset="0" stop-color="#7fe83a"/><stop offset="0.5" stop-color="#3fc21e"/><stop offset="1" stop-color="#1c8a14"/></linearGradient>
<linearGradient id="mon" x1="0" y1="0" x2="1" y2="1"><stop offset="0" stop-color="#8ab8ee"/><stop offset="1" stop-color="#2a62b4"/></linearGradient>
</defs>
<rect x="0" y="458.5" width="640" height="21.5" fill="#f7f7f7"/>
<rect x="0" y="458.5" width="640" height="1" fill="#f2f6ff"/>
<!-- logo -->
<path d="M21 460 Q12 464 3.4 471.2 L6.7 479.5 Q12 472.5 18.8 467 Z" fill="url(#lg1)"/>
<path d="M19 466.8 Q13 471.5 8 478.6" fill="none" stroke="#2c2c2c" stroke-width="1.6" opacity=".9"/>
<path d="M20.6 460.2 Q12 464.4 4.2 471" fill="none" stroke="#e4e4e4" stroke-width="1.2"/>
<path d="M20.8 460 Q23 463 25 468.5 Q27 474 29.6 480.5" fill="none" stroke="#505050" stroke-width="2"/>
<path d="M19 461.5 L21 460 L22.5 463.5 L19.5 466.5Z" fill="#b8b8b8"/>
<!-- folder -->
<path d="M35.4 478 Q35 473 39.5 472 L39.5 478Z" fill="#9c9c9c"/>
<rect x="39.3" y="460.8" width="6.6" height="17.2" fill="url(#fold)" stroke="#d4ae62" stroke-width=".5"/>
<rect x="46.6" y="460" width="5.2" height="18" fill="url(#fold)" stroke="#d4ae62" stroke-width=".5"/>
<!-- terminal -->
<rect x="56" y="462.8" width="17.5" height="12.6" fill="url(#term)" stroke="#0a0a0a" stroke-width=".8"/>
<path d="M58.5 468.8 L62 471 L58.5 473.2" fill="none" stroke="#fff" stroke-width="1.2"/><rect x="63" y="472.6" width="3.4" height="1.1" fill="#eee"/>
<!-- globe -->
<circle cx="85.4" cy="469.1" r="8.3" fill="url(#globe)" stroke="#0e3468" stroke-width=".8"/>
<path d="M80.5 464.5 Q84 461.8 88 462.6 Q91 464 91.8 467 Q90 469.5 88.5 469 Q87.5 471.5 89.5 473.5 Q87 476.2 84 475.6 Q83.5 472.5 81.5 471.5 Q79.2 469.5 79.2 467 Q79.6 465.5 80.5 464.5Z" fill="#b9d4f0" opacity=".8"/>
<path d="M83 464 Q86 463 88 465 Q86.5 467.5 84 467 Q82.5 465.8 83 464Z" fill="#e6f0fb" opacity=".8"/>
<path d="M89.5 470.5 Q91.5 470 92.2 471.5 Q91.5 474 89.8 474.6Z" fill="#9fc0e6" opacity=".7"/>
<!-- round icon -->
<circle cx="106" cy="469" r="8.8" fill="#f0f2f5" stroke="#bcc2cc" stroke-width="1"/>
<path d="M98.5 465.8 Q101 464.2 103 466.2 Q105 463.6 108.5 464.2 Q105.5 465 104 467.6 Q101.5 467.8 98.5 465.8Z" fill="#2c3440"/>
<rect x="107" y="468.5" width="8" height="9.5" fill="#dcdad2" stroke="#a8a69c" stroke-width=".6"/><rect x="109.3" y="471.2" width="3.4" height="3.4" fill="#6e6a60"/>
<!-- monitor icon -->
<rect x="117.3" y="461.4" width="17" height="13" fill="#cfcfc6" stroke="#a4a49c" stroke-width=".7"/>
<path d="M119 463 L132.5 463 L132.5 469.5 L129.5 472.6 L119 472.6Z" fill="#2e2e2e"/>
<!-- blue desktop icon -->
<rect x="140.2" y="463.8" width="15" height="12.2" fill="url(#dsk)"/>
<rect x="142" y="466" width="3" height="2.4" fill="#a8c8ee"/><rect x="142" y="471" width="3" height="2.4" fill="#a8c8ee"/>
<rect x="143" y="476" width="9.5" height="1.6" fill="#9aa0a8"/>
<!-- xgnokii task button -->
<rect x="160.5" y="459.5" width="120" height="19.5" fill="#fafafa"/>
<rect x="161" y="478.6" width="120" height="1.2" fill="#a6a6a6"/>
<rect x="280" y="459.5" width="1.2" height="20.5" fill="#a6a6a6"/>
<rect x="165" y="465.8" width="10.6" height="8.5" fill="#b4b8b4" stroke="#70746e" stroke-width=".8"/><rect x="165" y="465.8" width="10.6" height="2.2" fill="#626a64"/>
<text x="182.4" y="473.4" font-size="12" fill="#1a1a1a" letter-spacing="-0.4">xgnokii</text>
<!-- presentation task button (pressed) -->
<rect x="282" y="459.5" width="119.2" height="19.2" fill="#dedede"/>
<rect x="282" y="459.5" width="119.2" height="1" fill="#c6c6c6"/><rect x="282" y="459.5" width="1" height="19.2" fill="#c6c6c6"/>
<rect x="285" y="463" width="12.6" height="12" fill="#2f6f86"/>
<rect x="285" y="463" width="12.6" height="3" fill="#9ab0c0"/>
<path d="M286 470.5 Q289 468 291 469.5 Q293 467 296.5 467.5 Q293.5 468.5 292 471 Q289.5 471.5 286 470.5Z" fill="#e8f0f4"/>
<text x="302.2" y="473.4" font-size="12" fill="#1a1a1a" letter-spacing="-0.07">Presentation ...</text>
<!-- tray -->
<path d="M523.6 462.2 Q523.2 461.6 524.2 462 L532.6 468.8 Q533.2 469.5 532.6 470.2 L524.2 477 Q523.2 477.4 523.4 476.6Z" fill="url(#play)" stroke="#2a9418" stroke-width=".6"/>
<rect x="544.6" y="460.4" width="12" height="8.2" fill="#4a78c4" stroke="#c8ccd6" stroke-width="1.3"/>
<rect x="548" y="469.2" width="8.6" height="4.6" fill="#c9c9c2"/>
<rect x="539.2" y="465.6" width="11.4" height="7.6" fill="#3f70c6" stroke="#d8dce4" stroke-width="1.4"/>
<rect x="538.6" y="474" width="12.4" height="3.4" fill="#dcdcd6" stroke="#a8aab0" stroke-width=".4"/>
<rect x="558.5" y="458.8" width="38" height="21.2" fill="#000"/>
<rect x="565" y="479.0" width="1" height="1" fill="#00f000"/><rect x="566" y="478.0" width="1" height="2" fill="#00f000"/><rect x="567" y="473.0" width="1" height="7" fill="#00f000"/><rect x="568" y="476.0" width="1" height="4" fill="#00f000"/><rect x="569" y="476.0" width="1" height="4" fill="#00f000"/><rect x="570" y="459.8" width="1" height="20.2" fill="#00f000"/><rect x="571" y="459.8" width="1" height="20.2" fill="#00f000"/><rect x="572" y="459.8" width="1" height="20.2" fill="#00f000"/><rect x="573" y="459.8" width="1" height="20.2" fill="#00f000"/><rect x="574" y="459.8" width="1" height="20.2" fill="#00f000"/><rect x="575" y="459.8" width="1" height="20.2" fill="#00f000"/><rect x="576" y="459.8" width="1" height="20.2" fill="#00f000"/><rect x="577" y="459.8" width="1" height="20.2" fill="#00f000"/><rect x="578" y="459.8" width="1" height="20.2" fill="#00f000"/><rect x="579" y="466.0" width="1" height="14" fill="#00f000"/><rect x="580" y="469.5" width="1" height="10.5" fill="#00f000"/><rect x="581" y="473.0" width="1" height="7" fill="#00f000"/><rect x="582" y="470.5" width="1" height="9.5" fill="#00f000"/><rect x="583" y="472.0" width="1" height="8" fill="#00f000"/><rect x="584" y="477.0" width="1" height="3" fill="#00f000"/><rect x="585" y="477.5" width="1" height="2.5" fill="#00f000"/><rect x="586" y="477.0" width="1" height="3" fill="#00f000"/><rect x="587" y="476.0" width="1" height="4" fill="#00f000"/><rect x="588" y="477.0" width="1" height="3" fill="#00f000"/><rect x="589" y="471.0" width="1" height="9" fill="#00f000"/><rect x="590" y="466.3" width="1" height="13.7" fill="#00f000"/><rect x="591" y="469.0" width="1" height="11" fill="#00f000"/><rect x="592" y="474.0" width="1" height="6" fill="#00f000"/><rect x="593" y="470.8" width="1" height="9.2" fill="#00f000"/><rect x="594" y="475.0" width="1" height="5" fill="#00f000"/><rect x="595" y="477.0" width="1" height="3" fill="#00f000"/><rect x="596" y="478.0" width="1" height="2" fill="#00f000"/>
<text x="600" y="473.4" font-size="12" fill="#111" stroke="#111" stroke-width="0.25" font-family="'DejaVu Serif','Liberation Serif',serif">13:06</text>
</g>
<!--END-TB-->
<g id="homeicon">
<defs><linearGradient id="hb" x1="0" y1="0" x2="0" y2="1"><stop offset="0" stop-color="#cdb4a6"/><stop offset="0.35" stop-color="#f6eee8"/><stop offset="0.6" stop-color="#ffffff"/><stop offset="1" stop-color="#ece4d0"/></linearGradient>
<linearGradient id="hd" x1="0" y1="0" x2="0" y2="1"><stop offset="0" stop-color="#1c140c"/><stop offset="1" stop-color="#5a5230"/></linearGradient></defs>
<rect x="56" y="15" width="4.2" height="10" fill="#f4f0ea"/><rect x="55.4" y="14.3" width="5.4" height="1.6" fill="#3a3a3a"/>
<path d="M36.4 27 L49.6 14.5 L63.2 27 L63.2 43.6 L36.4 43.6Z" fill="url(#hb)"/>
<rect x="36" y="43.3" width="27.6" height="1.2" fill="#4a4a40"/>
<rect x="46.8" y="33.5" width="6" height="10" fill="url(#hd)"/>
<path d="M34.6 28 L49.6 13.4 L64.6 28" fill="none" stroke="#241a14" stroke-width="2.2" stroke-linejoin="miter"/>
</g>
<g font-family="'DejaVu Sans','Liberation Sans',sans-serif" font-size="11" text-anchor="middle">
<text x="49.6" y="60" fill="#0a2c58" opacity=".8">My</text><text x="48.6" y="59" fill="#e8f4ff">My</text>
<text x="51.2" y="75" fill="#0a2c58" opacity=".8" letter-spacing="0.35">Documents</text><text x="50.2" y="74" fill="#e8f4ff" letter-spacing="0.35">Documents</text>
</g>
<g id="bannerswoosh"><path d="M300 64.5 Q470 60 624 33 L624 39 Q480 62 390 64.5Z" fill="#a4caf4" opacity=".3"/><path d="M390 64.5 Q480 62 624 39 L624 64.5Z" fill="#2450a8" opacity=".22"/><rect x="154" y="24" width="470" height="14" fill="#1a3a80" opacity=".06"/><rect x="154" y="44" width="470" height="20.5" fill="#fff" opacity=".05"/></g>
<g id="bannericons">
  <!-- icon 1 -->
  <rect x="478" y="32.5" width="35" height="26.5" rx="3.5" fill="#e9e7e1" stroke="#f3f1ec" stroke-width="1"/>
  <g fill="#6f685d"><circle cx="485" cy="40" r="1.7"/><circle cx="485" cy="45.5" r="1.7"/><circle cx="485" cy="51" r="1.7"/>
  <rect x="489.5" y="39" width="17.5" height="2"/><rect x="489.5" y="44.5" width="17.5" height="2"/><rect x="489.5" y="50" width="17.5" height="2"/></g>
  <!-- icon 2 -->
  <g transform="rotate(-8 541.5 45)">
    <rect x="526" y="33.5" width="31" height="23" rx="2.5" fill="#3b679e" stroke="#345c8f" stroke-width="1"/>
    <rect x="528.5" y="35.5" width="26" height="2.2" rx="1" fill="#86d92c"/>
    <g fill="#f4f8ff"><circle cx="531.5" cy="42.5" r="1.5"/><circle cx="531.5" cy="47.5" r="1.5"/><circle cx="531.5" cy="52.5" r="1.5"/></g>
    <g fill="#c4daf4"><rect x="535.5" y="41.6" width="18" height="1.8" rx=".9"/><rect x="535.5" y="46.6" width="18" height="1.8" rx=".9"/><rect x="535.5" y="51.6" width="18" height="1.8" rx=".9"/></g>
  </g>
  <!-- icon 3 -->
  <g transform="rotate(4 587.5 44)">
    <rect x="570" y="30" width="35.5" height="28" rx="3.5" fill="#7fd625" stroke="#b4ec6c" stroke-width="1.6"/>
    <path d="M574 31 L581 36 L575 41 L581 46 L575 51 L581 56 L574 57Z" fill="#a5e65a" opacity=".8"/>
    <g fill="#bf6c12"><rect x="582" y="39.5" width="18.5" height="2.3" rx="1"/><rect x="582" y="45" width="18.5" height="2.3" rx="1"/><rect x="582" y="50.5" width="18.5" height="2.3" rx="1"/></g>
  </g>
</g>
</svg>
</body></html>
